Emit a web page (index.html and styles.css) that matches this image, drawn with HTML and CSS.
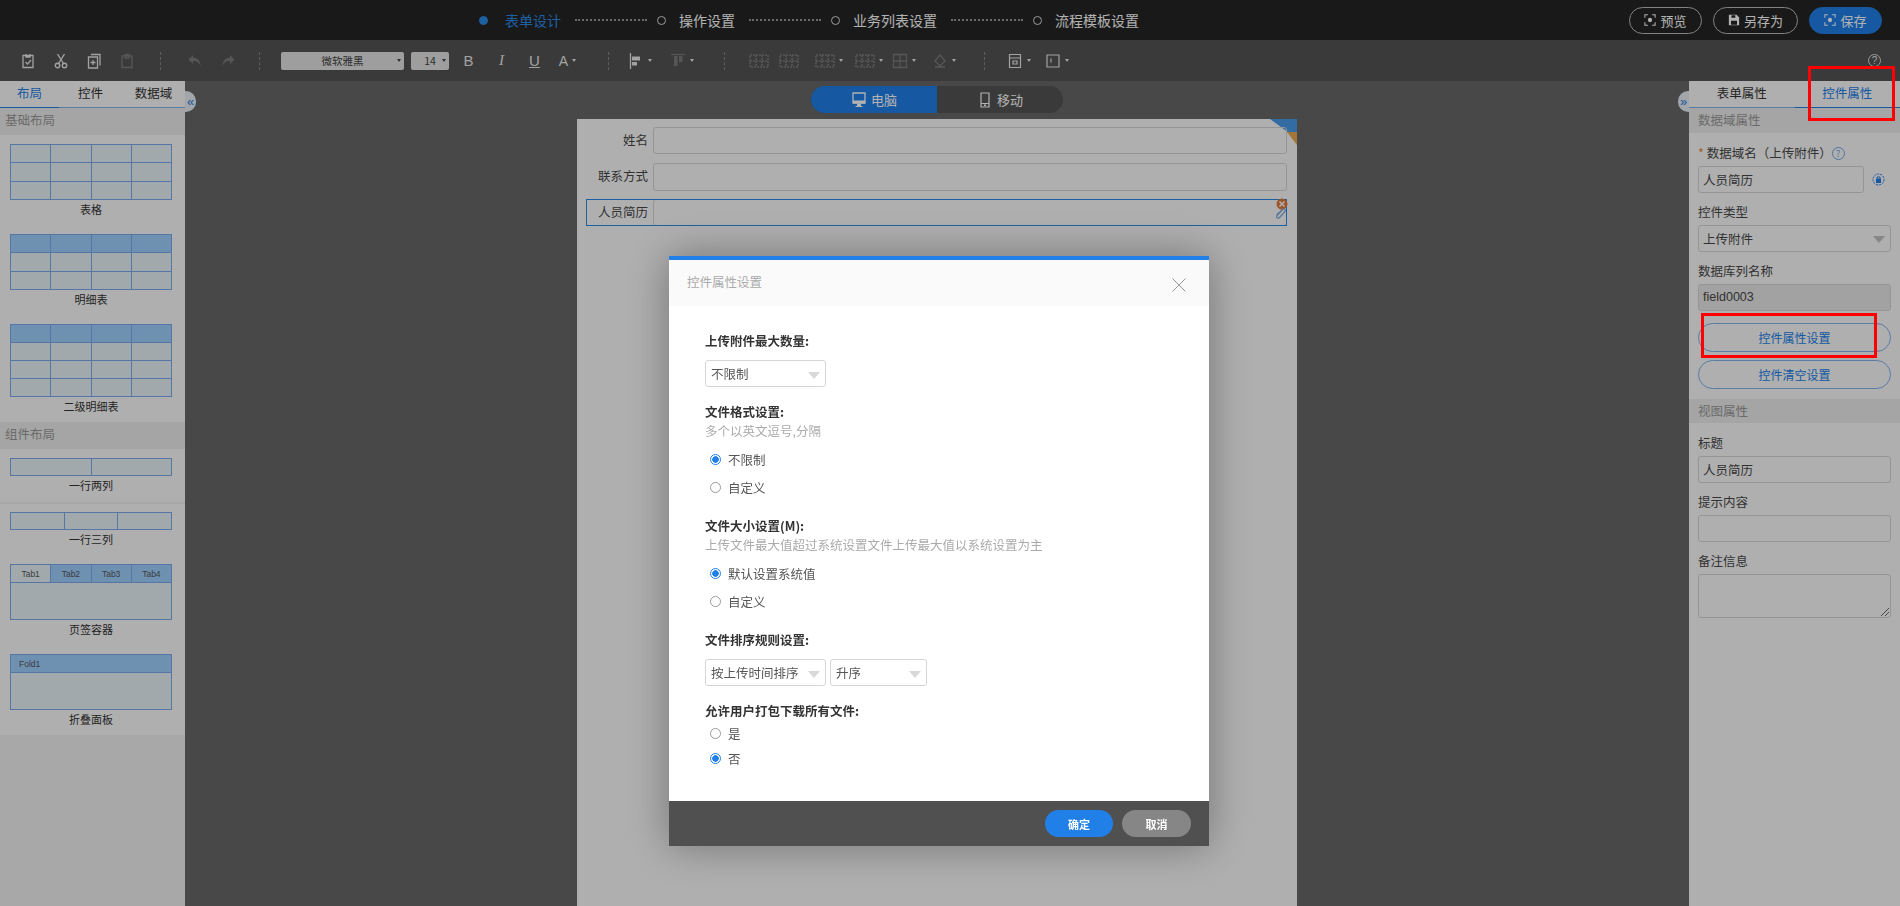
FILE: index.html
```html
<!DOCTYPE html>
<html>
<head>
  <meta charset="utf-8">
  <title>表单设计</title>
  <link rel="stylesheet" href="styles.css">
</head>
<body>
  <svg class="sprite" width="0" height="0">
    <symbol id="i-check" viewBox="0 0 14 16"><path d="M2 2.5h10v12H2zM5 1v3h4V1M4.5 9l2 2 3.500-4" fill="none" stroke="currentColor" stroke-width="1.300"/></symbol>
    <symbol id="i-cut" viewBox="0 0 14 16"><circle cx="3.500" cy="12.500" r="2.200" fill="none" stroke="currentColor" stroke-width="1.400"/><circle cx="10.500" cy="12.500" r="2.200" fill="none" stroke="currentColor" stroke-width="1.400"/><path d="M4.500 10.500L10.500 1M9.500 10.500L3.500 1" fill="none" stroke="currentColor" stroke-width="1.400"/></symbol>
    <symbol id="i-copy" viewBox="0 0 14 16"><path d="M4 1.500h9v11M1.500 4h9v11h-9zM6 7v5M3.500 9.500h5" fill="none" stroke="currentColor" stroke-width="1.300"/></symbol>
    <symbol id="i-paste" viewBox="0 0 14 16"><path d="M2 3h10v11.500H2zM5 1.500h4V5H5z" fill="none" stroke="currentColor" stroke-width="1.300"/></symbol>
    <symbol id="i-undo" viewBox="0 0 16 16"><path d="M6 2L1.500 6.500 6 11V8c4 0 6 1.500 7.500 5 0-5-3-8.500-7.500-8.500z" fill="currentColor"/></symbol>
    <symbol id="i-redo" viewBox="0 0 16 16"><path d="M10 2l4.500 4.500L10 11V8c-4 0-6 1.500-7.500 5 0-5 3-8.500 7.500-8.500z" fill="currentColor"/></symbol>
    <symbol id="i-align" viewBox="0 0 14 16"><path d="M1.500 0v16" stroke="currentColor" stroke-width="1.300"/><path d="M3 3.500h8v4H3zM3 9h5v3.500H3z" fill="currentColor"/></symbol>
    <symbol id="i-valign" viewBox="0 0 14 16"><path d="M0 1.500h14" stroke="currentColor" stroke-width="1.300"/><path d="M3 3h3.500v10H3zM8 3h3.500v6H8z" fill="currentColor"/></symbol>
    <symbol id="i-merge" viewBox="0 0 20 16"><path d="M1 2h18v12H1zM1 8h18M7 2v12M13 2v12" fill="none" stroke="currentColor" stroke-width="1.600" stroke-dasharray="2 1"/></symbol>
    <symbol id="i-grid" viewBox="0 0 16 16"><path d="M1.500 1.500h13v13h-13zM1.500 8h13M8 1.500v13" fill="none" stroke="currentColor" stroke-width="1.300"/></symbol>
    <symbol id="i-fill" viewBox="0 0 16 16"><path d="M8 2l5 6-5 5-5-5zM3 14h10" fill="none" stroke="currentColor" stroke-width="1.300"/></symbol>
    <symbol id="i-box" viewBox="0 0 14 16"><path d="M1.500 1.500h11v13h-11zM1.500 5h11M5 8h4v3H5z" fill="none" stroke="currentColor" stroke-width="1.200"/></symbol>
    <symbol id="i-frame" viewBox="0 0 14 16"><path d="M1 2h12v12H1zM5 5.500v4" fill="none" stroke="currentColor" stroke-width="1.200"/></symbol>
    <symbol id="i-focus" viewBox="0 0 14 14"><path d="M1 4.500V1h3.500M9.500 1H13v3.500M13 9.500V13H9.500M4.500 13H1V9.500" fill="none" stroke="currentColor" stroke-width="1.200"/><circle cx="7" cy="7" r="2.500" fill="currentColor"/></symbol>
    <symbol id="i-saveas" viewBox="0 0 14 14"><path d="M1 1h9l3 3v9H1z" fill="currentColor"/><path d="M4 1.500h4.500v3H4zM3.500 8h7v4.500h-7z" fill="#252525"/></symbol>
    <symbol id="i-pc" viewBox="0 0 14 16"><path d="M1 1h12v10H1z" fill="none" stroke="currentColor" stroke-width="1.300"/><path d="M1 8.500h12v3H1zM5 12h4v2H5zM3.500 14h7v1h-7z" fill="currentColor"/></symbol>
    <symbol id="i-phone" viewBox="0 0 10 16"><path d="M1 1h8v14H1zM1 11.500h8" fill="none" stroke="currentColor" stroke-width="1.200"/><path d="M4 12.500h2v1.500H4z" fill="currentColor"/></symbol>
  </svg>

  <header class="topbar">
    <div class="steps">
      <span class="step-dot active"></span><span class="step-text active">表单设计</span><span class="step-line"></span>
      <span class="step-dot"></span><span class="step-text">操作设置</span><span class="step-line"></span>
      <span class="step-dot"></span><span class="step-text">业务列表设置</span><span class="step-line"></span>
      <span class="step-dot"></span><span class="step-text">流程模板设置</span>
    </div>
    <div class="top-actions">
      <button class="top-btn"><svg class="ic14"><use href="#i-focus"/></svg>预览</button>
      <button class="top-btn wide"><svg class="ic14"><use href="#i-saveas"/></svg>另存为</button>
      <button class="top-btn primary"><svg class="ic14"><use href="#i-focus"/></svg>保存</button>
    </div>
  </header>

  <div class="toolbar">
    <span class="tool"><svg class="ic16"><use href="#i-check"/></svg></span>
    <span class="tool"><svg class="ic16"><use href="#i-cut"/></svg></span>
    <span class="tool"><svg class="ic16"><use href="#i-copy"/></svg></span>
    <span class="tool off"><svg class="ic16"><use href="#i-paste"/></svg></span>
    <span class="sep"></span>
    <span class="tool off"><svg class="ic16"><use href="#i-undo"/></svg></span>
    <span class="tool off"><svg class="ic16"><use href="#i-redo"/></svg></span>
    <span class="sep sep-b"></span>
    <span class="font-select">微软雅黑<i class="caret dark"></i></span>
    <span class="size-select">14<i class="caret dark"></i></span>
    <span class="tool txt bold">B</span>
    <span class="tool txt ital">I</span>
    <span class="tool txt under">U</span>
    <span class="tool txt color">A<i class="caret"></i></span>
    <span class="sep sep-c"></span>
    <span class="tool w42"><svg class="ic16"><use href="#i-align"/></svg><i class="caret"></i></span>
    <span class="tool w42 off"><svg class="ic16"><use href="#i-valign"/></svg><i class="caret"></i></span>
    <span class="sep sep-d"></span>
    <span class="tool w30 off"><svg class="ic20"><use href="#i-merge"/></svg></span>
    <span class="tool w30 off"><svg class="ic20"><use href="#i-merge"/></svg></span>
    <span class="tool w50 off"><svg class="ic20"><use href="#i-merge"/></svg><i class="caret"></i></span>
    <span class="tool w30 off"><svg class="ic20"><use href="#i-merge"/></svg><i class="caret"></i></span>
    <span class="tool w40 off"><svg class="ic16"><use href="#i-grid"/></svg><i class="caret"></i></span>
    <span class="tool w40 off"><svg class="ic16"><use href="#i-fill"/></svg><i class="caret"></i></span>
    <span class="sep sep-e"></span>
    <span class="tool w34"><svg class="ic16"><use href="#i-box"/></svg><i class="caret"></i></span>
    <span class="tool w42"><svg class="ic16"><use href="#i-frame"/></svg><i class="caret"></i></span>
    <span class="help">?</span>
  </div>

  <div class="main">
    <aside class="left-panel">
      <div class="tabs">
        <span class="tab active">布局</span>
        <span class="tab">控件</span>
        <span class="tab">数据域</span>
      </div>
      <div class="section-head tall">基础布局</div>
      <div class="group">
        <div class="layout-item">
          <table class="mini">
            <tr><td></td><td></td><td></td><td></td></tr>
            <tr><td></td><td></td><td></td><td></td></tr>
            <tr><td></td><td></td><td></td><td></td></tr>
          </table>
          <p>表格</p>
        </div>
        <div class="layout-item">
          <table class="mini">
            <tr class="head"><td></td><td></td><td></td><td></td></tr>
            <tr><td></td><td></td><td></td><td></td></tr>
            <tr><td></td><td></td><td></td><td></td></tr>
          </table>
          <p>明细表</p>
        </div>
        <div class="layout-item">
          <table class="mini four">
            <tr class="head"><td></td><td></td><td></td><td></td></tr>
            <tr><td></td><td></td><td></td><td></td></tr>
            <tr><td></td><td></td><td></td><td></td></tr>
            <tr><td></td><td></td><td></td><td></td></tr>
          </table>
          <p>二级明细表</p>
        </div>
      </div>
      <div class="section-head tall">组件布局</div>
      <div class="group">
        <div class="layout-item split">
          <table class="mini one"><tr><td></td><td></td></tr></table>
          <p>一行两列</p>
        </div>
        <div class="layout-item">
          <table class="mini one"><tr><td></td><td></td><td></td></tr></table>
          <p>一行三列</p>
        </div>
        <div class="layout-item">
          <table class="mini tabbed">
            <tr class="head"><td class="on">Tab1</td><td>Tab2</td><td>Tab3</td><td>Tab4</td></tr>
            <tr><td colspan="4"></td></tr>
          </table>
          <p>页签容器</p>
        </div>
        <div class="layout-item">
          <table class="mini tabbed">
            <tr class="head"><td class="fold">Fold1</td></tr>
            <tr><td></td></tr>
          </table>
          <p>折叠面板</p>
        </div>
      </div>
      <div class="left-rest"></div>
    </aside>

    <section class="center">
      <button class="collapse left">«</button>
      <div class="switch">
        <span class="switch-item on"><svg class="ic16"><use href="#i-pc"/></svg>电脑</span>
        <span class="switch-item"><svg class="ic16"><use href="#i-phone"/></svg>移动</span>
      </div>
      <div class="canvas">
        <svg class="corner" width="27" height="27" viewBox="0 0 27 27">
          <polygon points="0,0 27,0 27,14 19,14" fill="#4a9be8"/>
          <polygon points="17,13 27,13 27,26" fill="#e8a94f"/>
        </svg>
        <div class="row"><label>姓名</label><span class="cell"></span></div>
        <div class="row"><label>联系方式</label><span class="cell tall-cell"></span></div>
        <div class="row selected">
          <label>人员简历</label><span class="cell"></span>
          <svg class="del" width="12" height="12" viewBox="0 0 12 12"><circle cx="6" cy="6" r="5.500" fill="#e07a3a"/><path d="M3.500 3.500l5 5M8.500 3.500l-5 5" stroke="#fff" stroke-width="1.500"/></svg>
          <svg class="clip" width="12" height="14" viewBox="0 0 12 14"><path d="M9.500 2.500L3 9.500c-1.500 2 1 3.500 2.500 2L11 5.500c1-1.500-1-3.500-2.500-2L2.500 9" fill="none" stroke="#7da4dc" stroke-width="1.200"/></svg>
        </div>
      </div>
      <button class="collapse right">»</button>
    </section>

    <aside class="right-panel">
      <div class="tabs">
        <span class="tab">表单属性</span>
        <span class="tab active">控件属性</span>
      </div>
      <div class="section-head">数据域属性</div>
      <div class="props">
        <div class="prop">
          <label><em>*</em> 数据域名（上传附件）<span class="q">?</span></label>
          <div class="with-lock">
            <span class="input">人员简历</span>
            <svg class="lock" width="13" height="13" viewBox="0 0 13 13"><circle cx="6.500" cy="6.500" r="5.500" fill="none" stroke="#2080e8" stroke-dasharray="2 1"/><rect x="4" y="5.500" width="5" height="4.500" fill="#2080e8"/><path d="M5 5.500V4h3v1.500" fill="none" stroke="#2080e8"/></svg>
          </div>
        </div>
        <div class="prop">
          <label>控件类型</label>
          <span class="input sel">上传附件<i class="arrow"></i></span>
        </div>
        <div class="prop">
          <label>数据库列名称</label>
          <span class="input disabled">field0003</span>
        </div>
        <button class="pill">控件属性设置</button>
        <button class="pill">控件清空设置</button>
      </div>
      <div class="section-head view">视图属性</div>
      <div class="props">
        <div class="prop">
          <label>标题</label>
          <span class="input">人员简历</span>
        </div>
        <div class="prop">
          <label>提示内容</label>
          <span class="input"></span>
        </div>
        <div class="prop">
          <label>备注信息</label>
          <span class="input area">
            <svg class="grip" width="9" height="9" viewBox="0 0 9 9"><path d="M9 1L1 9M9 5L5 9" stroke="#666"/></svg>
          </span>
        </div>
      </div>
    </aside>
  </div>

  <div class="overlay"></div>

  <div class="modal">
    <div class="modal-head">
      <span>控件属性设置</span>
      <svg class="close" width="14" height="14" viewBox="0 0 14 14"><path d="M.5.500l13 13M13.500.500l-13 13" stroke="#999"/></svg>
    </div>
    <div class="modal-body">
      <div class="setting">
        <h4>上传附件最大数量:</h4>
        <div class="picks"><span class="pick">不限制<i class="arrow light"></i></span></div>
      </div>
      <div class="setting">
        <h4>文件格式设置:</h4>
        <p class="hint">多个以英文逗号,分隔</p>
        <div class="radio"><i class="dot on"></i>不限制</div>
        <div class="radio"><i class="dot"></i>自定义</div>
      </div>
      <div class="setting">
        <h4>文件大小设置(M):</h4>
        <p class="hint">上传文件最大值超过系统设置文件上传最大值以系统设置为主</p>
        <div class="radio"><i class="dot on"></i>默认设置系统值</div>
        <div class="radio"><i class="dot"></i>自定义</div>
      </div>
      <div class="setting">
        <h4>文件排序规则设置:</h4>
        <div class="picks">
          <span class="pick">按上传时间排序<i class="arrow light"></i></span>
          <span class="pick short">升序<i class="arrow light"></i></span>
        </div>
      </div>
      <div class="setting">
        <h4>允许用户打包下载所有文件:</h4>
        <div class="radio tight"><i class="dot"></i>是</div>
        <div class="radio tight"><i class="dot on"></i>否</div>
      </div>
    </div>
    <div class="modal-foot">
      <button class="foot-btn ok">确定</button>
      <button class="foot-btn cancel">取消</button>
    </div>
  </div>

  <div class="mark mark-tab"></div>
  <div class="mark mark-btn"></div>
</body>
</html>
```

FILE: styles.css
```css
* {
  box-sizing: border-box;
}

html, body {
  margin: 0;
  padding: 0;
  height: 906px;
  overflow: hidden;
}

body {
  display: flex;
  flex-direction: column;
  font-family: "Noto Sans CJK SC", "Liberation Sans", sans-serif;
  font-size: 12.5px;
  color: #484848;
  background: #676767;
}

.sprite {
  position: absolute;
}

button {
  font-family: inherit;
  border: none;
  padding: 0;
}

.ic14 { width: 12px; height: 12px; margin-right: 4px; }
.ic16 { width: 16px; height: 16px; }
.ic20 { width: 20px; height: 16px; }

/* top bar */
.topbar {
  height: 40px;
  flex: none;
  background: #252525;
  display: flex;
  align-items: center;
  color: #fff;
}

.steps {
  display: flex;
  align-items: center;
  margin-left: 479px;
}

.step-dot {
  width: 9px;
  height: 9px;
  border: 1.5px solid #ddd;
  border-radius: 50%;
  margin-right: 13px;
}

.step-dot.active {
  background: #2a8ae8;
  border-color: #2a8ae8;
  margin-right: 17px;
}

.step-text {
  font-size: 14px;
  line-height: 20px;
}

.step-text.active {
  color: #2a8ae8;
}

.step-line {
  width: 72px;
  border-top: 2px dotted #999;
  margin: 0 10px 0 14px;
}

.top-actions {
  margin-left: auto;
  margin-right: 18px;
  display: flex;
  gap: 11px;
}

.top-btn {
  width: 73px;
  height: 27px;
  border: 1px solid #bbb;
  border-radius: 14px;
  background: transparent;
  color: #fff;
  font-size: 13px;
  display: flex;
  align-items: center;
  justify-content: center;
}

.top-btn.wide {
  width: 85px;
}

.top-btn.primary {
  background: #2080e8;
  border-color: #2080e8;
}

/* tool bar */
.toolbar {
  height: 41px;
  flex: none;
  background: #535353;
  display: flex;
  align-items: center;
  padding-left: 11px;
  padding-right: 19px;
  color: #e8e8e8;
}

.tool {
  width: 33px;
  height: 20px;
  display: flex;
  align-items: center;
  justify-content: center;
  flex: none;
}

.tool.off { color: #7c7c7c; }
.w30 { width: 30px; }
.w34 { width: 34px; }
.w40 { width: 40px; }
.w42 { width: 42px; }
.w50 { width: 50px; }

.txt {
  font-family: "Liberation Sans", sans-serif;
  font-size: 15px;
}

.ital { font-family: "Liberation Serif", serif; font-style: italic; }
.under { text-decoration: underline; }
.color { font-size: 14px; }

.caret {
  display: inline-block;
  margin-left: 4px;
  border: 2.5px solid transparent;
  border-top: 3px solid #e8e8e8;
  border-bottom: 0;
}

.caret.dark {
  border-top-color: #444;
}

.sep {
  width: 1px;
  height: 18px;
  flex: none;
  border-left: 1px dashed #858585;
  margin: 0 17px;
}

.sep-b { margin: 0 21px 0 15px; }
.sep-c { margin: 0 10px 0 24px; }
.sep-d { margin: 0 19px 0 21px; }
.sep-e { margin: 0 17px 0 20px; }

.font-select,
.size-select {
  height: 18px;
  background: #e3e3e3;
  border-radius: 2px;
  color: #444;
  font-size: 10.5px;
  display: flex;
  align-items: center;
  justify-content: center;
  position: relative;
  flex: none;
}

.font-select {
  width: 123px;
  margin-right: 7px;
}

.size-select {
  width: 38px;
  margin-right: 3px;
}

.font-select .caret { position: absolute; right: 3px; }
.size-select .caret { position: absolute; right: 3px; }

.help {
  margin-left: auto;
  width: 13px;
  height: 13px;
  border: 1px solid #ddd;
  border-radius: 50%;
  font-size: 10px;
  line-height: 11px;
  text-align: center;
  font-family: "Liberation Sans", sans-serif;
}

/* three columns */
.main {
  flex: 1;
  display: flex;
  min-height: 0;
}

.left-panel {
  width: 185px;
  flex: none;
  background: #fbfbfb;
  display: flex;
  flex-direction: column;
}

.right-panel {
  width: 211px;
  flex: none;
  background: #fbfbfb;
}

.tabs {
  height: 27px;
  display: flex;
  border-bottom: 1px solid #7fb2ea;
  color: #333;
}

.tab {
  flex: 1;
  text-align: center;
  line-height: 24px;
  margin-bottom: -1px;
}

.tab.active {
  color: #2080e8;
  border-bottom: 1px solid #2080e8;
}

.section-head {
  height: 25px;
  line-height: 24px;
  padding-left: 9px;
  color: #999;
  background: #ececec;
}

.section-head.tall {
  height: 27px;
  padding-left: 5px;
}

.left-panel .tab:first-child {
  flex: 0 0 59px;
}

.group {
  padding-top: 9px;
}

.layout-item {
  padding: 0 13px 16px 10px;
}

.layout-item:last-child {
  padding-bottom: 7px;
}

.layout-item.split {
  padding-bottom: 8px;
  margin-bottom: 8px;
  border-bottom: 2px solid #efefef;
}

.layout-item p {
  margin: 0;
  text-align: center;
  font-size: 11px;
  line-height: 18px;
  color: #333;
}

.mini {
  width: 162px;
  height: 56px;
  table-layout: fixed;
  border-collapse: collapse;
  background: #e9f3f8;
  border: 1px solid #7ca9ee;
}

.mini td {
  border: 1px solid #7ca9ee;
  padding: 0;
}

.mini tr:not(.tabbed tr) td:nth-child(odd):not([colspan]) {
  border-right-style: dashed;
}

.mini.four { height: 73px; }
.mini.one { height: 18px; }

.mini .head td {
  background: #9ed0ff;
  height: 18px;
}

.mini.tabbed {
  height: 56px;
}

.tabbed .head td {
  font-family: "Liberation Sans", sans-serif;
  font-size: 8.5px;
  color: #555;
  text-align: center;
  border-bottom-style: dotted;
}

.tabbed .head td.on {
  background: #e9f3f8;
}

.tabbed .head td.fold {
  text-align: left;
  padding-left: 8px;
  border-bottom-style: none;
}

.left-rest {
  flex: 1;
  background: #f1f1f1;
}

/* center */
.center {
  flex: 1;
  position: relative;
  display: flex;
  flex-direction: column;
  align-items: center;
  min-width: 0;
}

.collapse {
  position: absolute;
  top: 10px;
  width: 11px;
  height: 21px;
  background: #e9eef4;
  color: #2080e8;
  font-size: 13px;
  line-height: 17px;
  font-family: "Liberation Sans", sans-serif;
  overflow: hidden;
}

.collapse.left {
  left: 0;
  border-radius: 0 10px 10px 0;
}

.collapse.right {
  right: 0;
  border-radius: 10px 0 0 10px;
}

.switch {
  display: flex;
  margin-top: 5px;
  height: 27px;
  width: 252px;
  border-radius: 14px;
  overflow: hidden;
  flex: none;
  background: #535353;
  color: #fff;
}

.switch-item {
  flex: 1;
  display: flex;
  align-items: center;
  justify-content: center;
  gap: 4px;
  font-size: 13px;
}

.switch-item.on {
  flex: 0 0 126px;
  background: #2080e8;
}

.canvas {
  position: relative;
  width: 720px;
  flex: 1;
  margin-top: 6px;
  background: #fbfbfb;
  padding: 8px 10px 0 9px;
}

.corner {
  position: absolute;
  top: 0;
  right: 0;
}

.row {
  display: flex;
  height: 27px;
  margin-bottom: 9px;
  position: relative;
}

.row label {
  width: 67px;
  padding-right: 5px;
  text-align: right;
  line-height: 25px;
  flex: none;
}

.cell {
  flex: 1;
  border: 1px solid #d6d6d6;
  border-radius: 3px;
}

.tall-cell {
  height: 28px;
}

.row.selected {
  outline: 1px solid #2a8ae8;
  outline-offset: -1px;
}

.del {
  position: absolute;
  right: -1px;
  top: -1px;
}

.clip {
  position: absolute;
  right: 1px;
  top: 7px;
}

/* right panel */
.props {
  padding: 11px 9px 0;
}

.prop {
  margin-bottom: 10px;
}

.prop label {
  display: block;
  line-height: 18px;
  margin-bottom: 4px;
}

.prop em {
  color: #e0883a;
  font-style: normal;
}

.q {
  display: inline-block;
  width: 13px;
  height: 13px;
  border: 1px solid #6fa6e8;
  border-radius: 50%;
  color: #6fa6e8;
  font-size: 9px;
  line-height: 11px;
  text-align: center;
  vertical-align: 1px;
}

.input {
  display: block;
  height: 27px;
  line-height: 25px;
  padding-left: 4px;
  border: 1px solid #d6d6d6;
  border-radius: 3px;
  position: relative;
}

.with-lock {
  display: flex;
  align-items: center;
}

.with-lock .input {
  width: 166px;
}

.lock {
  margin-left: 8px;
}

.disabled {
  background: #e8e8e8;
  font-family: "Liberation Sans", sans-serif;
}

.area {
  height: 44px;
}

.grip {
  position: absolute;
  right: 1px;
  bottom: 1px;
}

.arrow {
  position: absolute;
  right: 5px;
  top: 10px;
  border: 6px solid transparent;
  border-top: 7px solid #c2c2c2;
  border-bottom: 0;
}

.arrow.light {
  border-top-color: #d8d8d8;
  top: 11px;
}

.pill {
  display: block;
  width: 100%;
  height: 29px;
  margin-bottom: 8px;
  border: 1px solid #7fb2ea;
  border-radius: 15px;
  background: transparent;
  color: #2080e8;
  font-size: 12px;
}

.pill:first-of-type {
  margin-top: 12px;
}

.props .pill:last-child {
  margin-bottom: 10px;
}

.section-head.view {
  height: 24px;
}

/* dim layer and dialog */
.overlay {
  position: fixed;
  inset: 0;
  background: rgba(0, 0, 0, 0.3);
}

.modal {
  position: fixed;
  left: 669px;
  top: 256px;
  width: 540px;
  height: 590px;
  display: flex;
  flex-direction: column;
  background: #fff;
  border-top: 4px solid #2080e8;
  box-shadow: 0 0 40px rgba(0, 0, 0, 0.35);
}

.modal-head {
  height: 46px;
  flex: none;
  background: #fafafa;
  padding-left: 18px;
  display: flex;
  justify-content: space-between;
  color: #aaa;
  line-height: 44px;
}

.close {
  margin: 18px 23px 0 0;
}

.modal-body {
  flex: 1;
  padding: 25px 36px 0;
  color: #555;
}

.setting {
  margin-bottom: 15px;
}

.setting h4 {
  margin: 0;
  font-size: 12.5px;
  line-height: 20px;
  color: #333;
}

.picks {
  display: flex;
  gap: 4px;
  margin-top: 9px;
}

.pick {
  position: relative;
  width: 121px;
  height: 27px;
  line-height: 25px;
  padding-left: 5px;
  border: 1px solid #d6d6d6;
  border-radius: 3px;
}

.pick.short {
  width: 97px;
}

.hint {
  margin: 0 0 5px;
  line-height: 18px;
  color: #aaa;
}

.radio {
  height: 28px;
  display: flex;
  align-items: center;
  padding-left: 5px;
}

.radio.tight {
  height: 25px;
}

.dot {
  width: 11px;
  height: 11px;
  margin-right: 7px;
  border: 1px solid #999;
  border-radius: 50%;
  flex: none;
}

.dot.on {
  border-color: #2080e8;
  background: radial-gradient(circle, #2080e8 0 3px, #fff 3.5px);
}

.modal-foot {
  height: 45px;
  flex: none;
  background: #505050;
  display: flex;
  justify-content: flex-end;
  align-items: center;
  gap: 9px;
  padding-right: 18px;
}

.foot-btn {
  height: 27px;
  border-radius: 14px;
  color: #fff;
  font-size: 11px;
  font-weight: bold;
}

.foot-btn.ok {
  width: 68px;
  background: #2080e8;
}

.foot-btn.cancel {
  width: 69px;
  background: #868686;
}

/* red annotation boxes drawn over the screenshot */
.mark {
  position: fixed;
  border: 3px solid #f00;
}

.mark-tab {
  left: 1808px;
  top: 66px;
  width: 87px;
  height: 55px;
}

.mark-btn {
  left: 1701px;
  top: 313px;
  width: 176px;
  height: 45px;
}
```
